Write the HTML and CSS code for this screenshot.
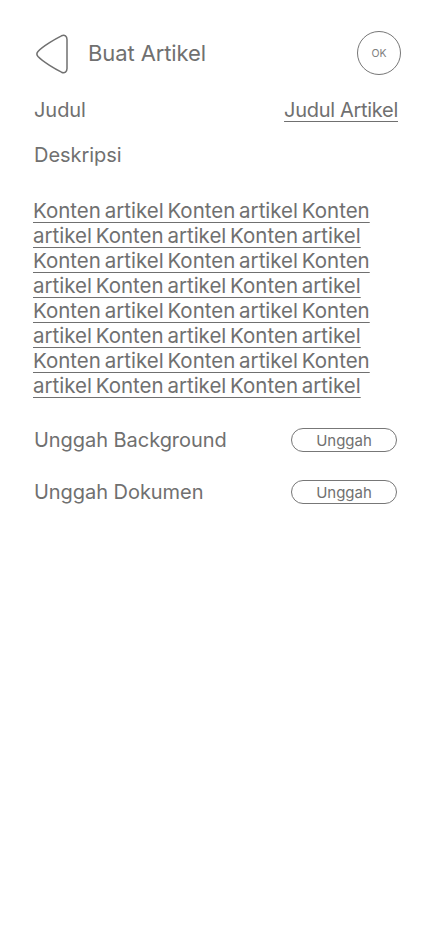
FILE: index.html
```html
<!DOCTYPE html>
<html lang="id">
<head>
<meta charset="utf-8">
<title>Buat Artikel</title>
<link rel="stylesheet" href="styles.css">
</head>
<body>
<div class="page">
  <header class="top">
    <div class="top-left">
      <svg class="back" width="34" height="40" viewBox="0 0 34 40" fill="none" stroke="#707070" stroke-width="1.5" stroke-linejoin="round">
        <path d="M26.5 1.8 C29.8 0.4 32 2.2 32 5.5 L32 34.5 C32 37.8 29.8 39.6 26.5 38.2 C21 35.5 8 28 3 22.6 C1.7 21.1 1.7 18.9 3 17.4 C8 12 21 4.5 26.5 1.8 Z"/>
      </svg>
      <h1 class="title">Buat Artikel</h1>
    </div>
    <button class="ok">OK</button>
  </header>

  <div class="row judul">
    <span class="label">Judul</span>
    <span class="value">Judul Artikel</span>
  </div>

  <div class="label desc-label">Deskripsi</div>

  <p class="content">Konten artikel Konten artikel Konten artikel Konten artikel Konten artikel Konten artikel Konten artikel Konten artikel Konten artikel Konten artikel Konten artikel Konten artikel Konten artikel Konten artikel Konten artikel Konten artikel Konten artikel Konten artikel Konten artikel Konten artikel</p>

  <div class="row upload">
    <span class="label">Unggah Background</span>
    <button class="pill">Unggah</button>
  </div>
  <div class="row upload">
    <span class="label">Unggah Dokumen</span>
    <button class="pill">Unggah</button>
  </div>
</div>
</body>
</html>
```

FILE: styles.css
```css
* { box-sizing: border-box; }
html, body { margin: 0; padding: 0; background: #fff; }
body {
  font-family: Inter, "Open Sans", "Liberation Sans", sans-serif;
  color: #707070;
}
.page {
  padding: 31px 31px 0 34px;
  display: flex;
  flex-direction: column;
}
.top {
  display: flex;
  align-items: center;
  justify-content: space-between;
  height: 44px;
}
.top-left {
  display: flex;
  align-items: center;
  gap: 19px;
}
.back { display: block; margin-left: 1px; margin-top: 1px; }
.title {
  margin: 0;
  font-size: 22px;
  font-weight: 400;
  letter-spacing: -0.1px;
  color: #707070;
}
.ok {
  width: 44px;
  height: 44px;
  border-radius: 50%;
  border: 1px solid #777;
  background: #fff;
  color: #808080;
  font-family: inherit;
  font-size: 10.5px;
  padding: 0;
  margin-right: -4px;
}
.row {
  display: flex;
  align-items: center;
  justify-content: space-between;
}
.label {
  font-size: 20px;
  letter-spacing: -0.05px;
}
.value {
  font-size: 20px;
  letter-spacing: -0.3px;
  text-decoration: underline;
  text-underline-offset: 4px;
  text-decoration-thickness: 1px;
  margin-right: -1px;
}
.judul { margin-top: 23px; height: 24px; }
.desc-label { margin-top: 21px; height: 24px; line-height: 24px; }
.content {
  margin: 31px 0 0 -1px;
  width: 345px;
  font-size: 20.5px;
  line-height: 25px;
  letter-spacing: 0;
  word-spacing: -2px;
  text-decoration: underline;
  text-underline-offset: 4px;
  text-decoration-thickness: 1px;
}
.upload { height: 24px; margin-top: 28px; }
.content + .upload { margin-top: 30px; }
.pill {
  width: 106px;
  height: 24px;
  border: 1px solid #777;
  border-radius: 12px;
  background: #fff;
  color: #707070;
  font-family: inherit;
  font-size: 15px;
  letter-spacing: 0;
  padding: 0;
}
```
